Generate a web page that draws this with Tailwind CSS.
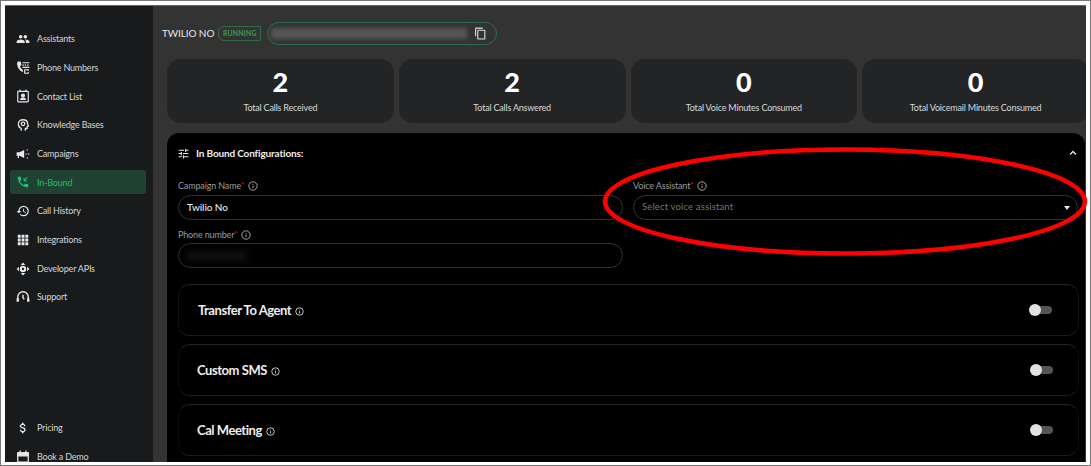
<!DOCTYPE html>
<html lang="en">
<head>
    <meta charset="UTF-8">
    <title>In-Bound</title>
    <script src="https://cdn.jsdelivr.net/npm/@tailwindcss/browser@4"></script>
</head>
<body class="font-['Lato',sans-serif] bg-white">
    <div class="relative w-[1091px] h-[466px] border border-[#777] bg-white pt-[4px] pl-[4px] overflow-hidden">
        <div class="flex w-[1081px] h-[457px] border-t border-[#666] overflow-hidden">

            <!-- sidebar -->
            <aside class="w-[148px] shrink-0 bg-[#191a1c] flex flex-col justify-between pl-[5px] pr-[7px] pt-[21px]">
                <nav class="flex flex-col gap-[4.7px]">
                    <a class="flex items-center h-[24px] pl-[6px] gap-[7px] text-[9px] tracking-[-0.2px] text-[#d6d6d6] rounded-[3px]">
                        <svg class="w-[14px] h-[14px] shrink-0" viewBox="0 0 24 24" fill="#e8e8e8"><path d="M16 11c1.66 0 2.99-1.34 2.99-3S17.66 5 16 5c-1.66 0-3 1.34-3 3s1.34 3 3 3zm-8 0c1.66 0 2.99-1.34 2.99-3S9.66 5 8 5C6.34 5 5 6.34 5 8s1.34 3 3 3zm0 2c-2.33 0-7 1.17-7 3.5V19h14v-2.5c0-2.33-4.67-3.5-7-3.5zm8 0c-.29 0-.62.02-.97.05 1.16.84 1.97 1.97 1.97 3.45V19h6v-2.5c0-2.33-4.67-3.5-7-3.5z"/></svg>
                        Assistants
                    </a>
                    <a class="flex items-center h-[24px] pl-[6px] gap-[7px] text-[9px] tracking-[-0.2px] text-[#d6d6d6] rounded-[3px]">
                        <svg class="w-[14px] h-[14px] shrink-0" viewBox="0 0 24 24" fill="#e8e8e8"><path d="M4 1h4l1.500 6-2.700 2c1 3 2.700 5 5.200 6.500V19C6 17.500 1.500 10 2 3.500 2 2 3 1 4 1z"/><path d="M11 2h12v2H11zM11 6h2.500v2H11zM15 6h2.500v2H15zM19 6h2.500v2H19zM11 10h12v2H11z"/><path d="M14 14h8v3h-2v-1h-4v4h4v-1h2v3h-8z"/></svg>
                        Phone Numbers
                    </a>
                    <a class="flex items-center h-[24px] pl-[6px] gap-[7px] text-[9px] tracking-[-0.2px] text-[#d6d6d6] rounded-[3px]">
                        <svg class="w-[14px] h-[14px] shrink-0" viewBox="0 0 24 24" fill="none" stroke="#e8e8e8" stroke-width="2"><rect x="3" y="4" width="18" height="18" rx="1"/><path d="M7 1v4M17 1v4M7 18h10"/><circle cx="12" cy="11" r="2.500" fill="#e8e8e8"/><path d="M7.500 17c.5-3 8.500-3 9 0z" fill="#e8e8e8" stroke="none"/></svg>
                        Contact List
                    </a>
                    <a class="flex items-center h-[24px] pl-[6px] gap-[7px] text-[9px] tracking-[-0.2px] text-[#d6d6d6] rounded-[3px]">
                        <svg class="w-[14px] h-[14px] shrink-0" viewBox="0 0 24 24" fill="none" stroke="#e8e8e8" stroke-width="2.200"><path d="M9 22v-4c-3-1.500-5-4-5-7.500C4 6 7.500 3 12 3s8 3 8 7.500c0 1 1.500 3 1.500 3.500L19 15v3h-3v4"/><circle cx="12" cy="10" r="3"/></svg>
                        Knowledge Bases
                    </a>
                    <a class="flex items-center h-[24px] pl-[6px] gap-[7px] text-[9px] tracking-[-0.2px] text-[#d6d6d6] rounded-[3px]">
                        <svg class="w-[14px] h-[14px] shrink-0" viewBox="0 0 24 24" fill="#e8e8e8"><path d="M1 9h5l8-4v14l-8-4H5v4H3v-4H1z"/><path d="M16 11h2v2h-2zM18 5l2-1 .8 1.600-2 1zM18 19l2 1 .8-1.600-2-1zM20 11h3v2h-3z"/></svg>
                        Campaigns
                    </a>
                    <a class="flex items-center h-[24px] pl-[6px] gap-[7px] text-[9px] tracking-[-0.2px] font-medium text-[#22b866] bg-[#1f4233] rounded-[3px]">
                        <svg class="w-[14px] h-[14px] shrink-0" viewBox="0 0 24 24" fill="#22c472"><path d="M6.620 10.790c1.440 2.830 3.760 5.140 6.590 6.590l2.200-2.200c.27-.27.67-.36 1.020-.24 1.120.37 2.330.57 3.570.57.55 0 1 .45 1 1V20c0 .55-.45 1-1 1-9.390 0-17-7.610-17-17 0-.55.45-1 1-1h3.500c.55 0 1 .45 1 1 0 1.250.2 2.450.57 3.570.11.35.03.74-.25 1.020l-2.200 2.200z"/><path d="M20 4.400 18.900 3.300 14.500 7.700V5H13v5.500h5.500V9h-2.900z"/></svg>
                        In-Bound
                    </a>
                    <a class="flex items-center h-[24px] pl-[6px] gap-[7px] text-[9px] tracking-[-0.2px] text-[#d6d6d6] rounded-[3px]">
                        <svg class="w-[14px] h-[14px] shrink-0" viewBox="0 0 24 24" fill="#e8e8e8"><path d="M13 3a9 9 0 0 0-9 9H1l3.890 3.890.07.14L9 12H6c0-3.870 3.130-7 7-7s7 3.130 7 7-3.130 7-7 7c-1.930 0-3.680-.79-4.940-2.060l-1.420 1.420A8.954 8.954 0 0 0 13 21a9 9 0 0 0 0-18zm-1 5v5l4.280 2.540.72-1.210-3.500-2.080V8H12z"/></svg>
                        Call History
                    </a>
                    <a class="flex items-center h-[24px] pl-[6px] gap-[7px] text-[9px] tracking-[-0.2px] text-[#d6d6d6] rounded-[3px]">
                        <svg class="w-[14px] h-[14px] shrink-0" viewBox="0 0 24 24" fill="#e8e8e8"><path d="M3 3h5v5H3zM9.500 3h5v5h-5zM16 3h5v5h-5zM3 9.500h5v5H3zM9.500 9.500h5v5h-5zM16 9.500h5v5h-5zM3 16h5v5H3zM9.500 16h5v5h-5zM16 16h5v5h-5z"/></svg>
                        Integrations
                    </a>
                    <a class="flex items-center h-[24px] pl-[6px] gap-[7px] text-[9px] tracking-[-0.2px] text-[#d6d6d6] rounded-[3px]">
                        <svg class="w-[14px] h-[14px] shrink-0" viewBox="0 0 24 24" fill="#e8e8e8"><path d="M12 1l4 4H8zM12 23l-4-4h8zM1 12l4-4v8zM23 12l-4 4V8z"/><path fill-rule="evenodd" d="M12 6.500a5.500 5.500 0 1 0 0 11 5.500 5.500 0 0 0 0-11zm0 3.500a2 2 0 1 1 0 4 2 2 0 0 1 0-4z"/></svg>
                        Developer APIs
                    </a>
                    <a class="flex items-center h-[24px] pl-[6px] gap-[7px] text-[9px] tracking-[-0.2px] text-[#d6d6d6] rounded-[3px]">
                        <svg class="w-[14px] h-[14px] shrink-0" viewBox="0 0 24 24" fill="none" stroke="#e8e8e8" stroke-width="2.400"><path d="M3 18v-6a9 9 0 0 1 18 0v6"/><path d="M1 14h4v6H1zM19 14h4v6h-4z" fill="#e8e8e8" stroke="none"/><path d="M12 8v5l2 3"/></svg>
                        Support
                    </a>
                </nav>
                <nav class="flex flex-col gap-[5px] -mb-[7px]">
                    <a class="flex items-center h-[24px] pl-[6px] gap-[7px] text-[9px] tracking-[-0.2px] text-[#d6d6d6] rounded-[3px]">
                        <svg class="w-[14px] h-[14px] shrink-0" viewBox="0 0 24 24" fill="#f0f0f0"><path d="M11.800 10.900c-2.270-.59-3-1.200-3-2.150 0-1.090 1.010-1.850 2.700-1.850 1.780 0 2.440.85 2.500 2.100h2.210c-.07-1.720-1.120-3.300-3.210-3.810V3h-3v2.160c-1.940.42-3.500 1.680-3.500 3.610 0 2.310 1.910 3.460 4.700 4.130 2.500.6 3 1.480 3 2.410 0 .69-.49 1.790-2.700 1.790-2.060 0-2.870-.92-2.980-2.100h-2.200c.12 2.190 1.760 3.420 3.680 3.830V21h3v-2.150c1.950-.37 3.500-1.500 3.500-3.550 0-2.840-2.430-3.810-4.700-4.400z"/></svg>
                        Pricing
                    </a>
                    <a class="flex items-center h-[24px] pl-[6px] gap-[7px] text-[9px] tracking-[-0.2px] text-[#d6d6d6] rounded-[3px]">
                        <svg class="w-[14px] h-[14px] shrink-0" viewBox="0 0 24 24" fill="none" stroke="#e8e8e8" stroke-width="2.200"><path d="M3 5h18v16H3z"/><path d="M3 5h18v5H3z" fill="#e8e8e8"/><path d="M7 1v4M17 1v4"/></svg>
                        Book a Demo
                    </a>
                </nav>
            </aside>

            <!-- main -->
            <main class="flex-1 min-w-0 bg-[#333333] pl-[9px]">
                <div class="flex items-center h-[24px] mt-[15px]">
                    <span class="text-[10px] tracking-[-0.1px] text-[#e4e4e4]">TWILIO NO</span>
                    <span class="ml-[4px] h-[15px] w-[43px] flex items-center justify-center border border-[#2f6b45] rounded-l-[6px] text-[6.800px] font-bold tracking-[0.2px] text-[#3f9a50]">RUNNING</span>
                    <div class="ml-[6px] w-[230px] h-[23px] border border-[#2c6e50] rounded-full flex items-center pl-[3px] pr-[9px]">
                        <div class="w-[196px] h-[11px] bg-[#555555] blur-[2px]"></div>
                        <svg class="ml-auto w-[13px] h-[13px]" viewBox="0 0 24 24" fill="#dddddd"><path d="M16 1H4c-1.100 0-2 .9-2 2v14h2V3h12V1zm3 4H8c-1.100 0-2 .9-2 2v14c0 1.100.9 2 2 2h11c1.100 0 2-.9 2-2V7c0-1.100-.9-2-2-2zm0 16H8V7h11v14z"/></svg>
                    </div>
                </div>

                <div class="ml-[5px] mt-[14px] w-[922px] grid grid-cols-4 gap-[5px]">
                    <div class="h-[64px] rounded-[14px] bg-[#232425] flex flex-col items-center pt-[8px]">
                        <span class="text-[27px] leading-[30px] font-black text-white">2</span>
                        <span class="mt-[5px] text-[9px] tracking-[-0.2px] leading-[12px] text-[#d8d8d8]">Total Calls Received</span>
                    </div>
                    <div class="h-[64px] rounded-[14px] bg-[#232425] flex flex-col items-center pt-[8px]">
                        <span class="text-[27px] leading-[30px] font-black text-white">2</span>
                        <span class="mt-[5px] text-[9px] tracking-[-0.2px] leading-[12px] text-[#d8d8d8]">Total Calls Answered</span>
                    </div>
                    <div class="h-[64px] rounded-[14px] bg-[#232425] flex flex-col items-center pt-[8px]">
                        <span class="text-[27px] leading-[30px] font-black text-white">0</span>
                        <span class="mt-[5px] text-[9px] tracking-[-0.2px] leading-[12px] text-[#d8d8d8]">Total Voice Minutes Consumed</span>
                    </div>
                    <div class="h-[64px] rounded-[14px] bg-[#232425] flex flex-col items-center pt-[8px]">
                        <span class="text-[27px] leading-[30px] font-black text-white">0</span>
                        <span class="mt-[5px] text-[9px] tracking-[-0.2px] leading-[12px] text-[#d8d8d8]">Total Voicemail Minutes Consumed</span>
                    </div>
                </div>

                <!-- configuration panel -->
                <section class="ml-[5px] mt-[10px] w-[918px] h-[340px] bg-black rounded-[12px] px-[11px]">
                    <div class="flex items-center h-[40px] -ml-[1px]">
                        <svg class="w-[13px] h-[13px]" viewBox="0 0 24 24" fill="#e8e8e8"><path d="M3 17v2h6v-2H3zM3 5v2h10V5H3zm10 16v-2h8v-2h-8v-2h-2v6h2zM7 9v2H3v2h4v2h2V9H7zm14 4v-2H11v2h10zm-6-4h2V7h4V5h-4V3h-2v6z"/></svg>
                        <span class="ml-[6px] text-[10px] tracking-[-0.15px] font-bold text-[#eeeeee]">In Bound Configurations:</span>
                        <svg class="ml-auto -mr-[5px] w-[12px] h-[12px]" viewBox="0 0 24 24" fill="none" stroke="#e8e8e8" stroke-width="2.500"><path d="M6 15l6-6 6 6"/></svg>
                    </div>

                    <div class="grid grid-cols-[445px_445px] gap-x-[10px] mt-[7px]">
                        <div>
                            <div class="flex items-center h-[12px] text-[9px] tracking-[-0.15px] text-[#9a9a9a]">Campaign Name<span class="text-[#e11] self-start text-[7px]">*</span>
                                <svg class="ml-[4px] w-[10px] h-[10px]" viewBox="0 0 24 24" fill="none" stroke="#c8c8c8" stroke-width="2"><circle cx="12" cy="12" r="10"/><path d="M12 11v6M12 7v2"/></svg>
                            </div>
                            <div class="mt-[3px] h-[25px] border border-[#333333] rounded-full flex items-center pl-[8px] text-[10px] tracking-[-0.1px] font-medium text-[#e8e8e8]">Twilio No</div>
                        </div>
                        <div>
                            <div class="flex items-center h-[12px] text-[9px] tracking-[-0.15px] text-[#9a9a9a]">Voice Assistant<span class="text-[#e11] self-start text-[7px]">*</span>
                                <svg class="ml-[4px] w-[10px] h-[10px]" viewBox="0 0 24 24" fill="none" stroke="#c8c8c8" stroke-width="2"><circle cx="12" cy="12" r="10"/><path d="M12 11v6M12 7v2"/></svg>
                            </div>
                            <div class="mt-[3px] h-[25px] border border-[#333333] rounded-full flex items-center pl-[8px] pr-[7px] text-[9.500px] tracking-[0.15px] text-[#777777]">Select voice assistant
                                <svg class="ml-auto w-[6px] h-[4px]" viewBox="0 0 6 4" fill="#e8e8e8"><path d="M0 0h6L3 4z"/></svg>
                            </div>
                        </div>
                        <div class="mt-[9px]">
                            <div class="flex items-center h-[12px] text-[9px] tracking-[-0.15px] text-[#9a9a9a]">Phone number<span class="text-[#e11] self-start text-[7px]">*</span>
                                <svg class="ml-[4px] w-[10px] h-[10px]" viewBox="0 0 24 24" fill="none" stroke="#c8c8c8" stroke-width="2"><circle cx="12" cy="12" r="10"/><path d="M12 11v6M12 7v2"/></svg>
                            </div>
                            <div class="mt-[2px] h-[25px] border border-[#333333] rounded-full flex items-center pl-[8px]">
                                <div class="w-[60px] h-[10px] bg-[#111111] blur-[3px]"></div>
                            </div>
                        </div>
                    </div>

                    <div class="flex flex-col gap-[8px] mt-[16px] w-[901px]">
                        <div class="h-[52px] border border-[#111111] border-t-[#242424] border-b-[#1c1c1c] rounded-[12px] flex items-center pl-[19px] pr-[26px]">
                            <span class="mt-[2px] text-[13px] tracking-[-0.45px] font-bold text-[#eeeeee]">Transfer To Agent</span>
                            <svg class="mt-[2px] ml-[4px] w-[9px] h-[9px]" viewBox="0 0 24 24" fill="none" stroke="#d8d8d8" stroke-width="2.400"><circle cx="12" cy="12" r="10"/><path d="M12 11v6M12 7v2"/></svg>
                            <div class="relative ml-auto w-[23px] h-[12px]">
                                <div class="absolute right-0 top-[2px] w-[18px] h-[8px] rounded-full bg-[#555555]"></div>
                                <div class="absolute left-0 top-0 w-[12px] h-[12px] rounded-full bg-[#e2e2e2]"></div>
                            </div>
                        </div>
                        <div class="h-[52px] border border-[#0c0c0c] border-t-[#242424] border-b-[#1c1c1c] rounded-[12px] flex items-center pl-[18px] pr-[25px]">
                            <span class="mt-[2px] text-[13px] tracking-[-0.45px] font-bold text-[#eeeeee]">Custom SMS</span>
                            <svg class="mt-[2px] ml-[4px] w-[9px] h-[9px]" viewBox="0 0 24 24" fill="none" stroke="#d8d8d8" stroke-width="2.400"><circle cx="12" cy="12" r="10"/><path d="M12 11v6M12 7v2"/></svg>
                            <div class="relative ml-auto w-[23px] h-[12px]">
                                <div class="absolute right-0 top-[2px] w-[18px] h-[8px] rounded-full bg-[#555555]"></div>
                                <div class="absolute left-0 top-0 w-[12px] h-[12px] rounded-full bg-[#e2e2e2]"></div>
                            </div>
                        </div>
                        <div class="h-[52px] border border-[#0c0c0c] border-t-[#242424] border-b-[#1c1c1c] rounded-[12px] flex items-center pl-[18px] pr-[25px]">
                            <span class="mt-[2px] text-[13px] tracking-[-0.45px] font-bold text-[#eeeeee]">Cal Meeting</span>
                            <svg class="mt-[2px] ml-[4px] w-[9px] h-[9px]" viewBox="0 0 24 24" fill="none" stroke="#d8d8d8" stroke-width="2.400"><circle cx="12" cy="12" r="10"/><path d="M12 11v6M12 7v2"/></svg>
                            <div class="relative ml-auto w-[23px] h-[12px]">
                                <div class="absolute right-0 top-[2px] w-[18px] h-[8px] rounded-full bg-[#555555]"></div>
                                <div class="absolute left-0 top-0 w-[12px] h-[12px] rounded-full bg-[#e2e2e2]"></div>
                            </div>
                        </div>
                    </div>
                </section>
            </main>
        </div>

        <!-- red annotation drawn over the screenshot -->
        <svg class="absolute left-[-1px] top-[-1px] w-[1091px] h-[466px] pointer-events-none" viewBox="0 0 1091 466" fill="none">
            <ellipse cx="845" cy="201.500" rx="240" ry="52" stroke="#ff0000" stroke-width="4.500"/>
        </svg>
    </div>
</body>
</html>
